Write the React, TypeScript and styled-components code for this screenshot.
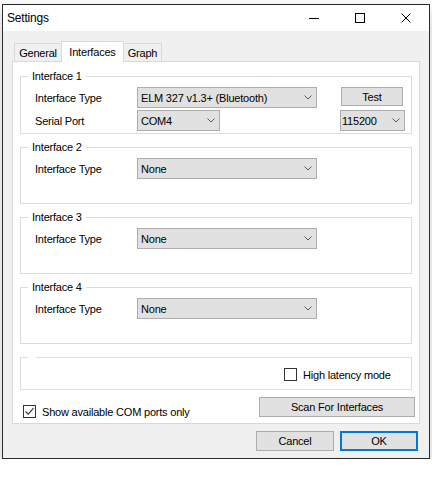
import styled, { createGlobalStyle } from 'styled-components'

// --- Global ---

const GlobalStyle = createGlobalStyle`
  html, body {
    margin: 0;
    padding: 0;
    background: #ffffff;
  }
  body {
    font-family: "Liberation Sans", Arial, sans-serif;
    font-size: 11px;
    letter-spacing: -0.2px;
    color: #000;
  }
`;

// --- Window frame ---

const Window = styled.div`
  box-sizing: border-box;
  width: 428px;
  height: 455px;
  margin: 4px 0 0 2px;
  border: 1px solid #2b2b2b;
  background: #f0f0f0;
  box-shadow: 0 6px 16px rgba(0, 0, 0, 0.22);
  display: flex;
  flex-direction: column;
`;

const TitleBar = styled.div`
  height: 26px;
  background: #ffffff;
  display: flex;
  align-items: center;
`;

const Title = styled.div`
  padding-left: 4px;
  font-size: 12px;
`;

const CaptionButtons = styled.div`
  margin-left: auto;
  display: flex;
`;

const CaptionButton = styled.div`
  width: 46px;
  height: 26px;
  display: flex;
  align-items: center;
  justify-content: center;
`;

const Body = styled.div`
  padding: 10px 9px 0 9px;
  display: flex;
  flex-direction: column;
`;

// --- Tabs ---

const TabStrip = styled.div`
  display: flex;
  align-items: flex-end;
  height: 20px;
  padding-left: 2px;
  position: relative;
  z-index: 1;
`;

const Tab = styled.div<{ $active?: boolean; $width: number }>`
  box-sizing: border-box;
  width: ${(p) => p.$width}px;
  height: ${(p) => (p.$active ? 21 : 18)}px;
  margin-bottom: ${(p) => (p.$active ? -1 : 0)}px;
  margin-left: -1px;
  border: 1px solid #d9d9d9;
  border-bottom: none;
  background: ${(p) => (p.$active ? '#ffffff' : '#f0f0f0')};
  display: flex;
  align-items: center;
  justify-content: center;
  position: relative;
  z-index: ${(p) => (p.$active ? 2 : 1)};

  &:first-child {
    margin-left: 0;
  }
`;

const Page = styled.div`
  box-sizing: border-box;
  height: 363px;
  background: #ffffff;
  border: 1px solid #d9d9d9;
  padding: 14px 7px 0 7px;
  display: flex;
  flex-direction: column;
`;

const GroupList = styled.div`
  display: flex;
  flex-direction: column;
  gap: 13px;
`;

// --- Group boxes ---

const Group = styled.div<{ $height: number }>`
  position: relative;
  box-sizing: border-box;
  height: ${(p) => p.$height}px;
  border: 1px solid #dcdcdc;
  padding: 10px 0 0 14px;
  display: flex;
  flex-direction: column;
  gap: 2px;
`;

const Legend = styled.div`
  position: absolute;
  top: -7px;
  left: 7px;
  height: 13px;
  line-height: 13px;
  padding: 0 4px;
  background: #ffffff;
`;

const Row = styled.div`
  display: flex;
  align-items: center;
  height: 21px;
`;

const FieldLabel = styled.div`
  width: 102px;
  flex-shrink: 0;
`;

const Combo = styled.div<{ $width: number; $right?: number }>`
  box-sizing: border-box;
  width: ${(p) => p.$width}px;
  height: 21px;
  border: 1px solid #adadad;
  background: #e1e1e1;
  display: flex;
  align-items: center;
  padding: 0 4px 0 3px;
  ${(p) => (p.$right !== undefined ? `margin-left: auto; margin-right: ${p.$right}px; padding-left: 1px;` : '')}
`;

const ComboText = styled.div`
  flex: 1;
  white-space: nowrap;
`;

const Button = styled.div<{ $width: number; $default?: boolean }>`
  box-sizing: border-box;
  width: ${(p) => p.$width}px;
  height: 20px;
  border: ${(p) => (p.$default ? '2px solid #0078d7' : '1px solid #adadad')};
  background: #e1e1e1;
  display: flex;
  align-items: center;
  justify-content: center;
  white-space: nowrap;
`;

const TestButton = styled(Button)`
  height: 19px;
  align-self: flex-start;
  margin-left: auto;
  margin-right: 8px;
`;

const LatencyRow = styled.div`
  display: flex;
  align-items: center;
  padding-left: 249px;
`;

const CheckLabel = styled.label`
  display: flex;
  align-items: center;
  gap: 6px;
  white-space: nowrap;
`;

const Box = styled.span`
  box-sizing: border-box;
  width: 13px;
  height: 13px;
  border: 1px solid #333333;
  background: #ffffff;
  display: flex;
  align-items: center;
  justify-content: center;
`;

const BottomRow = styled.div`
  height: 33px;
  display: flex;
  justify-content: space-between;
  margin: 0 -3px 0 3px;
`;

const ShowPortsCheck = styled(CheckLabel)`
  align-self: flex-start;
  margin-top: 15px;
`;

const ScanButton = styled(Button)`
  margin-top: 7px;
`;

const Footer = styled.div`
  display: flex;
  justify-content: flex-end;
  gap: 6px;
  padding: 7px 2px 0 0;
`;

// --- Small drawings ---

function Chevron() {
  return (
    <svg width="8" height="5" viewBox="0 0 8 5">
      <polyline points="0.5,0.5 4,4 7.5,0.5" fill="none" stroke="#5a5a5a" strokeWidth="1" />
    </svg>
  )
}

function Check({ checked }: { checked: boolean }) {
  return (
    <Box>
      {checked && (
        <svg width="11" height="11" viewBox="0 0 11 11">
          <polyline points="1.5,5.5 4.2,8.2 9.5,2.2" fill="none" stroke="#333" strokeWidth="1.1" />
        </svg>
      )}
    </Box>
  )
}

function Select({ value, width, right }: { value: string; width: number; right?: number }) {
  return (
    <Combo $width={width} $right={right}>
      <ComboText>{value}</ComboText>
      <Chevron />
    </Combo>
  )
}

// --- Main ---

const emptyInterfaces = ['Interface 2', 'Interface 3', 'Interface 4']

function App() {
  return (
    <>
      <GlobalStyle />
      <Window>
        <TitleBar>
          <Title>Settings</Title>
          <CaptionButtons>
            <CaptionButton>
              <svg width="10" height="10" viewBox="0 0 10 10">
                <line x1="0" y1="5.5" x2="10" y2="5.5" stroke="#000" strokeWidth="1" />
              </svg>
            </CaptionButton>
            <CaptionButton>
              <svg width="10" height="10" viewBox="0 0 10 10">
                <rect x="0.5" y="0.5" width="9" height="9" fill="none" stroke="#000" strokeWidth="1" />
              </svg>
            </CaptionButton>
            <CaptionButton>
              <svg width="10" height="10" viewBox="0 0 10 10">
                <path d="M0.5 0.5 L9.5 9.5 M9.5 0.5 L0.5 9.5" stroke="#000" strokeWidth="1" />
              </svg>
            </CaptionButton>
          </CaptionButtons>
        </TitleBar>

        <Body>
          <TabStrip>
            <Tab $width={48}>General</Tab>
            <Tab $width={63} $active>Interfaces</Tab>
            <Tab $width={39}>Graph</Tab>
          </TabStrip>

          <Page>
            <GroupList>
              <Group $height={58}>
                <Legend>Interface 1</Legend>
                <Row>
                  <FieldLabel>Interface Type</FieldLabel>
                  <Select value="ELM 327 v1.3+ (Bluetooth)" width={180} />
                  <TestButton $width={62}>Test</TestButton>
                </Row>
                <Row>
                  <FieldLabel>Serial Port</FieldLabel>
                  <Select value="COM4" width={83} />
                  <Select value="115200" width={65} right={6} />
                </Row>
              </Group>

              {emptyInterfaces.map((name) => (
                <Group key={name} $height={57}>
                  <Legend>{name}</Legend>
                  <Row>
                    <FieldLabel>Interface Type</FieldLabel>
                    <Select value="None" width={180} />
                  </Row>
                </Group>
              ))}

              <Group $height={33}>
                <Legend />
                <LatencyRow>
                  <CheckLabel>
                    <Check checked={false} />
                    High latency mode
                  </CheckLabel>
                </LatencyRow>
              </Group>
            </GroupList>

            <BottomRow>
              <ShowPortsCheck>
                <Check checked />
                Show available COM ports only
              </ShowPortsCheck>
              <ScanButton $width={156}>Scan For Interfaces</ScanButton>
            </BottomRow>
          </Page>

          <Footer>
            <Button $width={78}>Cancel</Button>
            <Button $width={78} $default>OK</Button>
          </Footer>
        </Body>
      </Window>
    </>
  )
}

export default App;
